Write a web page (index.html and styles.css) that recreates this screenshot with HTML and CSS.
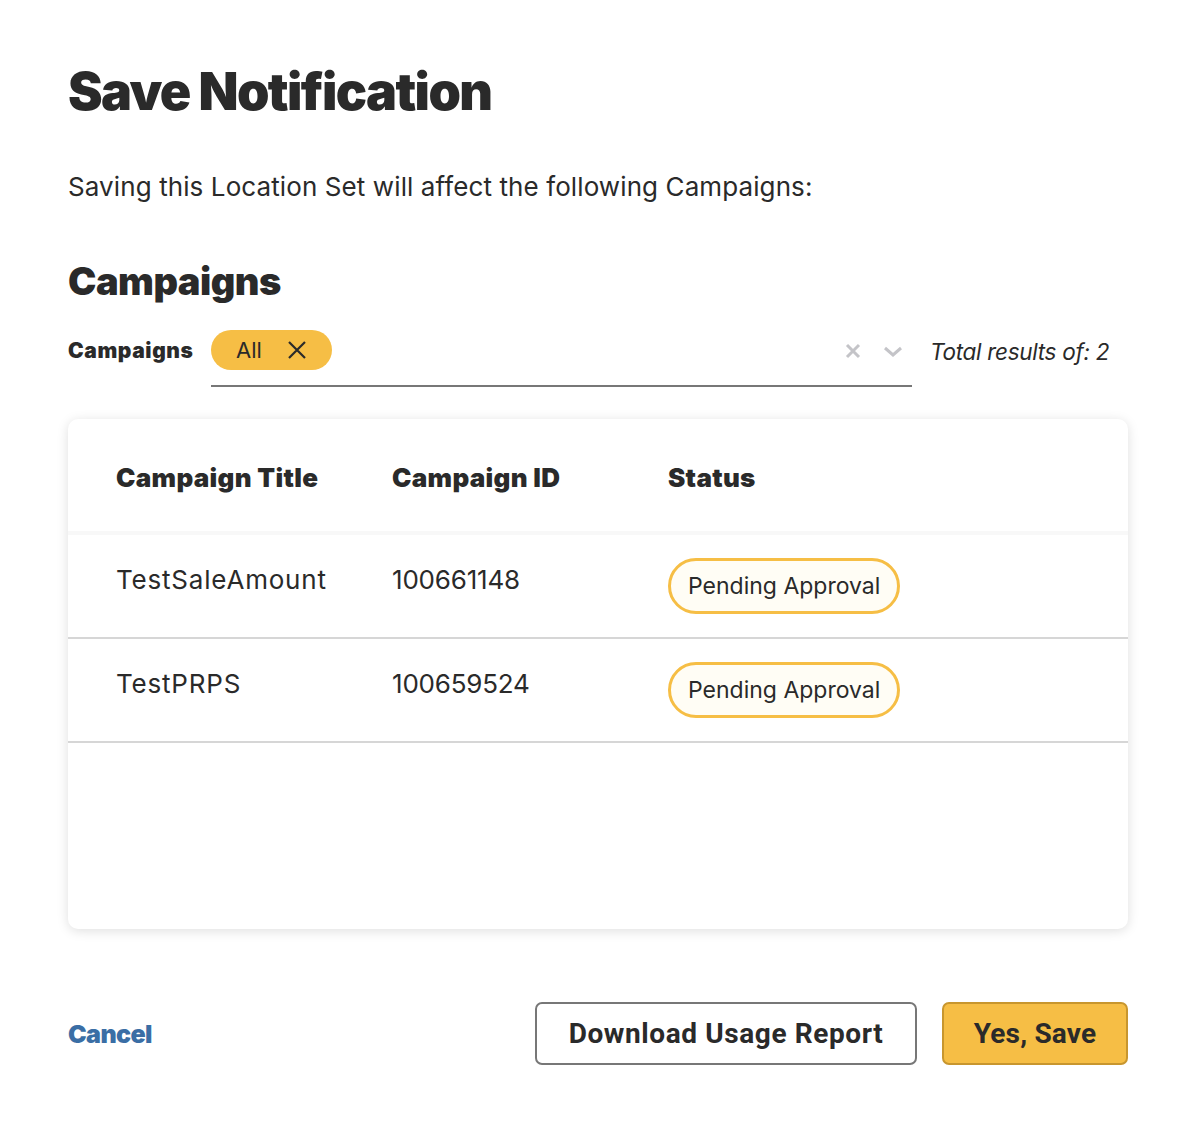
FILE: index.html
```html
<!DOCTYPE html>
<html>
<head>
<meta charset="utf-8">
<link rel="stylesheet" href="styles.css">
</head>
<body>
<div class="modal">
  <h1 class="title">Save Notification</h1>
  <p class="intro">Saving this Location Set will affect the following Campaigns:</p>
  <h2 class="section">Campaigns</h2>
  <div class="filter">
    <span class="filter-label">Campaigns</span>
    <div class="select">
      <span class="chip">All
        <svg class="chip-x" width="20" height="20" viewBox="0 0 20 20"><path d="M2 2 L18 18 M18 2 L2 18" stroke="#2a2a2a" stroke-width="2.2" fill="none"/></svg>
      </span>
      <span class="select-icons">
        <svg width="18" height="18" viewBox="0 0 18 18"><path d="M3 3 L15 15 M15 3 L3 15" stroke="#c4c4c8" stroke-width="3" fill="none"/></svg>
        <svg width="22" height="18" viewBox="0 0 22 18"><path d="M3 6 L11 13 L19 6" stroke="#c4c4c8" stroke-width="3" fill="none"/></svg>
      </span>
    </div>
    <span class="total">Total results of: 2</span>
  </div>
  <div class="card">
    <div class="row head">
      <div class="cell">Campaign Title</div>
      <div class="cell">Campaign ID</div>
      <div class="cell">Status</div>
    </div>
    <div class="row body">
      <div class="cell">TestSaleAmount</div>
      <div class="cell id">100661148</div>
      <div class="cell"><span class="badge">Pending Approval</span></div>
    </div>
    <div class="row body">
      <div class="cell">TestPRPS</div>
      <div class="cell id">100659524</div>
      <div class="cell"><span class="badge">Pending Approval</span></div>
    </div>
  </div>
  <div class="actions">
    <a class="cancel">Cancel</a>
    <div class="btns">
      <button class="btn outline">Download Usage Report</button>
      <button class="btn primary">Yes, Save</button>
    </div>
  </div>
</div>
</body>
</html>
```
FILE: styles.css
```css
* { box-sizing: border-box; }
body {
  margin: 0;
  background: #fff;
  font-family: Inter, "Open Sans", sans-serif;
  color: #2a2a2a;
}
.modal {
  padding: 62px 66px 0 68px;
}
.title {
  margin: 0;
  font-family: Inter, sans-serif;
  font-weight: 900;
  font-size: 52px;
  letter-spacing: -1.6px;
  line-height: 60px;
}
.intro {
  margin: 50px 0 0;
  font-size: 26px;
  line-height: 30px;
  letter-spacing: 0.1px;
}
.section {
  margin: 56px 0 0;
  font-family: Inter, sans-serif;
  font-weight: 900;
  font-size: 38px;
  letter-spacing: -0.5px;
  line-height: 46px;
}
.filter {
  display: flex;
  align-items: flex-start;
  margin-top: 26px;
}
.filter-label {
  font-family: Inter, sans-serif;
  font-weight: 900;
  font-size: 21px;
  letter-spacing: 0.6px;
  line-height: 42px;
  width: 143px;
  flex: none;
}
.select {
  width: 701px;
  height: 57px;
  border-bottom: 2px solid #777;
  display: flex;
  align-items: flex-start;
  justify-content: space-between;
}
.chip {
  display: inline-flex;
  align-items: center;
  height: 40px;
  padding: 0 25px;
  background: #f6be45;
  border-radius: 20px;
  font-size: 22px;
  gap: 25px;
}
.select-icons {
  display: flex;
  align-items: center;
  gap: 20px;
  height: 42px;
  padding-right: 8px;
}
.total {
  margin-left: 18px;
  font-style: italic;
  font-size: 22.5px;
  line-height: 44px;
  letter-spacing: -0.3px;
}
.card {
  margin-top: 32px;
  height: 510px;
  border-radius: 10px;
  box-shadow: 0 2px 12px rgba(0,0,0,0.13);
  background: #fff;
  overflow: hidden;
}
.row {
  display: grid;
  grid-template-columns: 276px 276px 1fr;
  padding-left: 48px;
}
.row.head {
  height: 116px;
  align-items: center;
  border-bottom: 4px solid #f8f8f8;
  font-family: Inter, sans-serif;
  font-weight: 900;
  font-size: 26px;
  letter-spacing: 0.3px;
  padding-top: 4px;
}
.row.body {
  height: 104px;
  border-bottom: 2px solid #d6d6d6;
  font-size: 26px;
  letter-spacing: 0.8px;
  padding-top: 28px;
  align-items: start;
  line-height: 34px;
}
.row.body .id {
  letter-spacing: -0.2px;
}
.badge {
  display: inline-block;
  margin-top: -5px;
  padding: 0 17px;
  height: 56px;
  line-height: 50px;
  border: 3px solid #f6be45;
  border-radius: 28px;
  background: #fffdf5;
  font-size: 23px;
  letter-spacing: 0;
}
.actions {
  display: flex;
  justify-content: space-between;
  align-items: center;
  margin-top: 73px;
}
.cancel {
  color: #3a6ea5;
  font-family: Inter, sans-serif;
  font-weight: 900;
  font-size: 25px;
  letter-spacing: -0.6px;
}
.btns {
  display: flex;
  gap: 25px;
}
.btn {
  height: 63px;
  border-radius: 7px;
  font-family: Roboto, sans-serif;
  font-weight: 700;
  font-size: 28px;
  letter-spacing: 0.6px;
  color: #2a2a2a;
  padding: 0;
}
.btn.outline {
  width: 382px;
  background: #fff;
  border: 2px solid #777;
}
.btn.primary {
  width: 186px;
  background: #f6be45;
  border: 2px solid #c8962e;
  letter-spacing: 0.2px;
}
```
